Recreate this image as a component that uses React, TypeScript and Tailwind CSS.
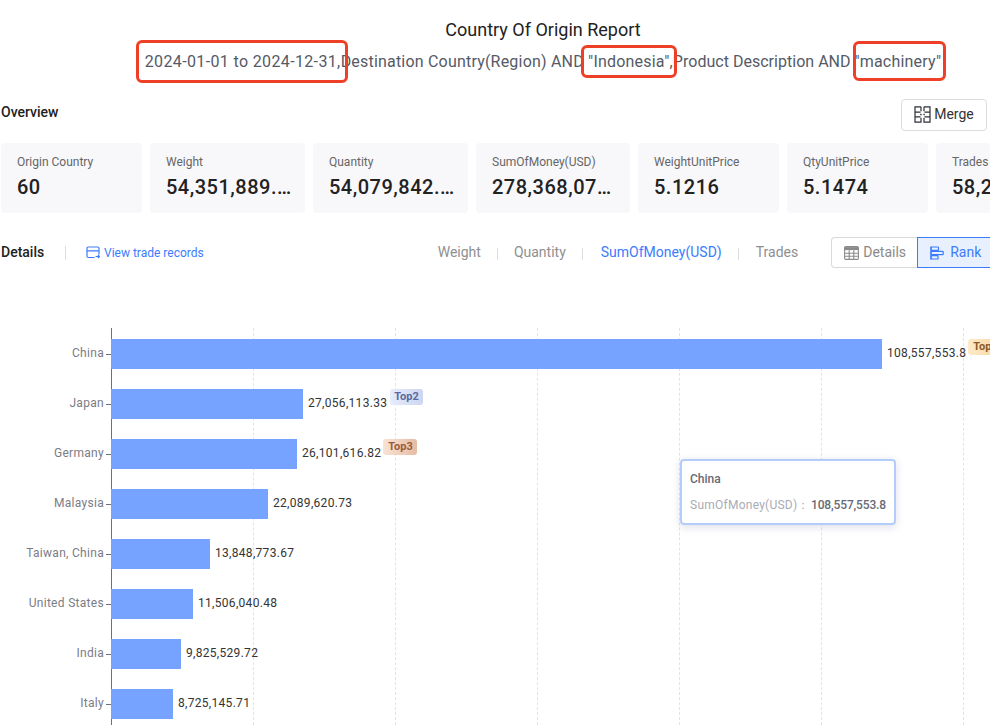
// Country of origin report: header, stat cards, rank chart
const stats = [
  { label: "Origin Country", value: "60", width: "w-[141px]" },
  { label: "Weight", value: "54,351,889.…", width: "w-[155px]" },
  { label: "Quantity", value: "54,079,842.…", width: "w-[155px]" },
  { label: "SumOfMoney(USD)", value: "278,368,07…", width: "w-[154px]" },
  { label: "WeightUnitPrice", value: "5.1216", width: "w-[141px]" },
  { label: "QtyUnitPrice", value: "5.1474", width: "w-[141px]" },
  { label: "Trades", value: "58,2", width: "w-[141px]" },
];

const rows = [
  { name: "China", value: "108,557,553.8", width: 771 },
  { name: "Japan", value: "27,056,113.33", width: 192 },
  { name: "Germany", value: "26,101,616.82", width: 186 },
  { name: "Malaysia", value: "22,089,620.73", width: 157 },
  { name: "Taiwan, China", value: "13,848,773.67", width: 99 },
  { name: "United States", value: "11,506,040.48", width: 82 },
  { name: "India", value: "9,825,529.72", width: 70 },
  { name: "Italy", value: "8,725,145.71", width: 62 },
];

const gridLines = ["left-[253px]", "left-[395px]", "left-[537px]", "left-[679px]", "left-[821px]", "left-[963px]"];

function MergeIcon() {
  return (
    <svg width="17" height="17" viewBox="0 0 17 17" fill="none" stroke="#2b2f36" strokeWidth="1.2">
      <path d="M7 .8H1v15.4h6v-4.5M7 5.3V.8M10 .8h6v15.4h-6v-4.5M10 5.3V.8" />
      <path d="M1 6.2h5.5M16 6.2h-5.5M1 10.8h5.5M16 10.8h-5.5" />
      <path d="M6.2 8.5h1.4M9.4 8.5h1.4" strokeWidth="1.6" />
    </svg>
  );
}

function RecordsIcon() {
  return (
    <svg width="14" height="13" viewBox="0 0 14 13" fill="none" stroke="#3b7cff" strokeWidth="1.2">
      <path d="M8.5 11.5H2.2A1.2 1.2 0 0 1 1 10.3V2.2A1.2 1.2 0 0 1 2.2 1h9.6A1.2 1.2 0 0 1 13 2.2v6.3" />
      <path d="M1 4.8h12M9.5 10.5h4M12 9l1.5 1.5L12 12" />
    </svg>
  );
}

function TableIcon() {
  return (
    <svg width="15" height="14" viewBox="0 0 15 14" fill="none" stroke="#8a8a8a" strokeWidth="1.1">
      <rect x="0.6" y="0.6" width="13.8" height="12.8" rx="1.2" />
      <path d="M.6 7.2h13.8M.6 10.2h13.8M5.2 4.2v9.2M9.8 4.2v9.2" />
      <path d="M.6 2.6h13.8" strokeWidth="3" />
    </svg>
  );
}

function RankIcon() {
  return (
    <svg width="14" height="14" viewBox="0 0 14 14" fill="none" stroke="#3b7cff" strokeWidth="1.2">
      <path d="M1 .4v13.2" />
      <rect x="1" y="1" width="7.5" height="3.4" rx="0.6" />
      <rect x="1" y="5.3" width="12.2" height="3.4" rx="0.6" />
      <rect x="1" y="9.6" width="7" height="3.4" rx="0.6" />
    </svg>
  );
}

function Badge({ index }: { readonly index: number }) {
  if (index === 0) {
    return (
      <span className="absolute left-[calc(100%+2px)] top-[-5px] h-4 w-[34px] rounded-[3px] bg-gradient-to-r from-[#fdebc8] to-[#f8d49d] pl-[5px] text-[11px] leading-4 font-bold tracking-normal text-[#8a5a28]">
        Top1
      </span>
    );
  }
  if (index === 1) {
    return (
      <span className="absolute left-[calc(100%+3px)] top-[-5px] h-4 w-[33px] rounded-[3px] bg-gradient-to-r from-[#e6ecfa] to-[#ccd6f0] pl-[4px] text-[11px] leading-4 font-bold tracking-normal text-[#5a6a9e]">
        Top2
      </span>
    );
  }
  if (index === 2) {
    return (
      <span className="absolute left-[calc(100%+2px)] top-[-5px] h-4 w-[34px] rounded-[3px] bg-gradient-to-r from-[#f8e3d6] to-[#e6bca2] pl-[5px] text-[11px] leading-4 font-bold tracking-normal text-[#9a5b3c]">
        Top3
      </span>
    );
  }
  return null;
}

export default function App() {
  return (
    <div className="relative h-[725px] w-[990px] overflow-hidden bg-white font-['Roboto',sans-serif]">
      <header className="flex flex-col items-center pl-[96px] pt-[19px]">
        <h1 className="text-[18px] leading-[22px] text-[#222]">Country Of Origin Report</h1>
        <p className="mt-[10px] text-[16px] leading-[22px] tracking-[0.2px] whitespace-nowrap text-[#555a66]">
          <span className="tracking-[0.36px]">2024-01-01 to 2024-12-31,</span>
          Destination Country(Region) AND "Indonesia",
          <span className="tracking-[0.02px]">Product Description AND </span>
          "machinery"
        </p>
      </header>

      {/* red marks drawn over the query */}
      <div className="absolute left-[136px] top-[40px] h-[43px] w-[212px] rounded-[6px] border-[3px] border-[#ee4026]" />
      <div className="absolute left-[581px] top-[45px] h-[33px] w-[96px] rounded-[6px] border-[3px] border-[#ee4026]" />
      <div className="absolute left-[853px] top-[41px] h-[40px] w-[93px] rounded-[6px] border-[3px] border-[#ee4026]" />

      <div className="mt-[26px] flex h-[32px] items-center justify-between pl-px pr-[3px]">
        <span className="-mt-[5px] text-[14px] font-medium text-[#222]">Overview</span>
        <button className="flex h-[32px] w-[86px] items-center justify-center gap-[3px] rounded-[4px] border border-[#dcdcdc] pb-px text-[14px] text-[#333]">
          <MergeIcon />
          Merge
        </button>
      </div>

      <div className="mt-[12px] flex gap-2 pl-px">
        {stats.map((stat) => (
          <div key={stat.label} className={`${stat.width} h-[70px] shrink-0 rounded-[4px] bg-[#f8f8fb] pl-4 pt-[11px]`}>
            <div className="text-[12px] leading-[16px] whitespace-nowrap text-[#666]">{stat.label}</div>
            <div className="mt-[4px] text-[20px] leading-[26px] font-medium tracking-[0.5px] whitespace-nowrap text-[#222]">
              {stat.value}
            </div>
          </div>
        ))}
      </div>

      <div className="mt-[24px] flex h-[31px] items-center pl-px">
        <span className="w-[44px] shrink-0 text-[14px] font-medium text-[#222]">Details</span>
        <span className="ml-[20px] h-[14px] w-px shrink-0 bg-[#ddd]" />
        <span className="ml-[20px] flex shrink-0 items-center gap-[4px] text-[12px] whitespace-nowrap text-[#3b7cff]">
          <RecordsIcon />
          View trade records
        </span>
        <div className="ml-[234px] flex shrink-0 items-center text-[14px] whitespace-nowrap text-[#8f8f8f]">
          <span>Weight</span>
          <span className="mx-4 mt-[3px] h-[12px] w-px bg-[#ddd]" />
          <span>Quantity</span>
          <span className="mr-[18px] ml-4 mt-[3px] h-[12px] w-px bg-[#ddd]" />
          <span className="text-[#3b7cff]">SumOfMoney(USD)</span>
          <span className="mr-[17px] ml-4 mt-[3px] h-[12px] w-px bg-[#ddd]" />
          <span>Trades</span>
        </div>
        <div className="ml-[33px] flex h-[31px] shrink-0 text-[14px]">
          <span className="flex w-[86px] items-center gap-[4px] rounded-l-[4px] border border-r-0 border-[#d9d9d9] pl-[12px] text-[#8a8a8a]">
            <TableIcon />
            Details
          </span>
          <span className="flex w-[80px] items-center gap-[6px] border border-[#3b7cff] bg-[#e8f0fe] pl-[12px] text-[#3b7cff]">
            <RankIcon />
            Rank
          </span>
        </div>
      </div>

      <section className="relative mt-[60px] h-[397px]">
        {gridLines.map((left) => (
          <div key={left} className={`absolute top-0 bottom-0 ${left} border-l border-dashed border-[#e2e3ea]`} />
        ))}
        <div className="absolute top-0 bottom-0 left-[111px] w-px bg-[#6e7079]" />

        <div className="relative pt-px">
          {rows.map((row, index) => (
            <div key={row.name} className="flex h-[50px] items-center">
              <span className="-mt-[2px] w-[104px] shrink-0 text-right text-[12px] tracking-[0.3px] whitespace-nowrap text-[#7b7c85]">{row.name}</span>
              <span className="ml-[2px] h-px w-[5px] shrink-0 bg-[#6e7079]" />
              <div className="h-[30px] shrink-0 bg-[#76a3ff]" style={{ width: row.width }} />
              <span className="relative ml-[5px] -mt-[2px] text-[12px] tracking-[0.3px] whitespace-nowrap text-[#333]">
                {row.value}
                <Badge index={index} />
              </span>
            </div>
          ))}
        </div>

        <div className="absolute left-[680px] top-[131px] h-[66px] w-[216px] rounded-[4px] border-2 border-[#b3cdfb] bg-white pl-[8px] pt-[9px] shadow-[0_2px_8px_rgba(60,80,120,0.18)]">
          <div className="text-[12px] leading-[18px] font-medium text-[#666a75]">China</div>
          <div className="mt-[8px] flex text-[12px] leading-[18px] whitespace-nowrap">
            <span className="w-[121px] tracking-[0.25px] text-[#a9abb5]">SumOfMoney(USD)：</span>
            <span className="tracking-[-0.15px] font-medium text-[#666a75]">108,557,553.8</span>
          </div>
        </div>
      </section>
    </div>
  );
}
